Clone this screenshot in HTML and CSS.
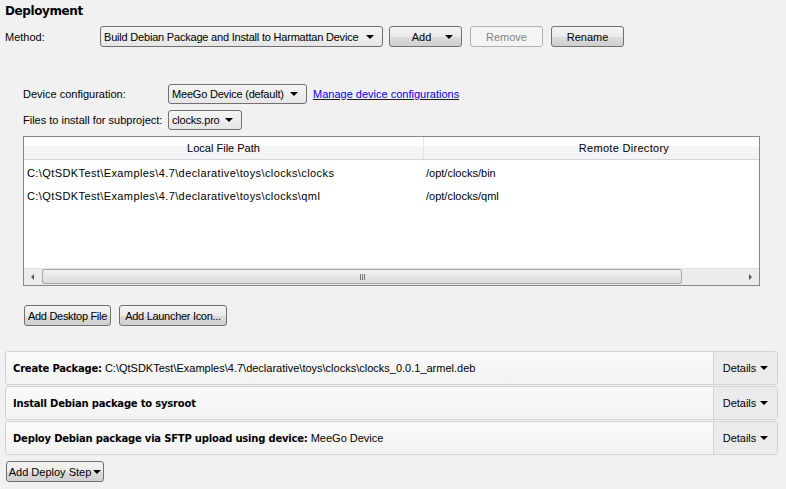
FILE: index.html
```html
<!DOCTYPE html>
<html>
<head>
<meta charset="utf-8">
<link rel="stylesheet" href="styles.css">
</head>
<body>
<div class="page">
  <div class="title">Deployment</div>
  <div class="method-row">
    <span class="method-label">Method:</span>
    <div class="combo combo-method"><span class="combo-text">Build Debian Package and Install to Harmattan Device</span><span class="arrow"></span></div>
    <div class="btn btn-add"><span class="btn-add-text">Add</span><span class="arrow"></span></div>
    <div class="btn btn-remove disabled">Remove</div>
    <div class="btn btn-rename">Rename</div>
  </div>

  <div class="device-section">
    <div class="form-row row-device">
      <span class="form-label">Device configuration:</span>
      <div class="combo combo-device"><span class="combo-text">MeeGo Device (default)</span><span class="arrow"></span></div>
      <a class="link">Manage device configurations</a>
    </div>
    <div class="form-row row-files">
      <span class="form-label">Files to install for subproject:</span>
      <div class="combo combo-files"><span class="combo-text">clocks.pro</span><span class="arrow"></span></div>
    </div>

    <div class="table">
      <div class="thead">
        <div class="th th-local">Local File Path</div>
        <div class="th th-remote">Remote Directory</div>
      </div>
      <div class="tbody">
        <div class="tr"><div class="td td-local">C:\QtSDKTest\Examples\4.7\declarative\toys\clocks\clocks</div><div class="td">/opt/clocks/bin</div></div>
        <div class="tr"><div class="td td-local">C:\QtSDKTest\Examples\4.7\declarative\toys\clocks\qml</div><div class="td">/opt/clocks/qml</div></div>
      </div>
      <div class="hscroll">
        <div class="sarrow sarrow-left"></div>
        <div class="strack"><div class="sthumb"><span class="grip"></span></div></div>
        <div class="sarrow sarrow-right"></div>
      </div>
    </div>

    <div class="file-buttons">
      <div class="btn btn-small btn-desktop">Add Desktop File</div>
      <div class="btn btn-small btn-launcher">Add Launcher Icon...</div>
    </div>
  </div>

  <div class="steps">
    <div class="step">
      <div class="step-text"><b>Create Package:</b> C:\QtSDKTest\Examples\4.7\declarative\toys\clocks\clocks_0.0.1_armel.deb</div>
      <div class="details">Details <span class="arrow"></span></div>
    </div>
    <div class="step">
      <div class="step-text"><b>Install Debian package to sysroot</b></div>
      <div class="details">Details <span class="arrow"></span></div>
    </div>
    <div class="step">
      <div class="step-text"><b>Deploy Debian package via SFTP upload using device:</b> MeeGo Device</div>
      <div class="details">Details <span class="arrow"></span></div>
    </div>
  </div>
  <div class="btn btn-deploy">Add Deploy Step<span class="arrow"></span></div>
</div>
</body>
</html>
```

FILE: styles.css
```css
html, body {
  margin: 0;
  padding: 0;
  background: #f1f1f1;
}
body {
  font-family: "Liberation Sans", Arial, sans-serif;
  font-size: 11px;
  color: #000;
  width: 786px;
  height: 489px;
  overflow: hidden;
}
.page {
  padding: 3px 9px 0 5px;
}
.title {
  font-family: "DejaVu Sans", sans-serif;
  font-weight: bold;
  font-size: 12px;
  letter-spacing: -0.4px;
  line-height: 16px;
  height: 18px;
}
.method-row {
  display: flex;
  align-items: center;
  height: 21px;
  margin-top: 5px;
}
.method-label {
  width: 95px;
}
.combo {
  box-sizing: border-box;
  height: 21px;
  border: 1px solid #707070;
  border-radius: 3px;
  background: linear-gradient(#f5f5f5, #e6e6e6);
  display: flex;
  align-items: center;
  padding: 0 8px 0 3px;
}
.combo-text {
  flex: 1;
  white-space: nowrap;
  letter-spacing: -0.2px;
}
.arrow {
  display: inline-block;
  width: 0;
  height: 0;
  border-left: 4px solid transparent;
  border-right: 4px solid transparent;
  border-top: 4px solid #000;
}
.combo-method { width: 283px; }
.btn {
  box-sizing: border-box;
  height: 21px;
  border: 1px solid #707070;
  border-radius: 3px;
  background: linear-gradient(#f3f3f3 0%, #ebebeb 50%, #dddddd 51%, #cfcfcf 100%);
  display: flex;
  align-items: center;
  justify-content: center;
  white-space: nowrap;
}
.btn-add {
  margin-left: 6px;
  width: 73px;
  padding: 0 8px 0 0;
}
.btn-add-text {
  flex: 1;
  text-align: center;
  padding-left: 8px;
}
.btn-remove {
  margin-left: 8px;
  width: 73px;
}
.disabled {
  border-color: #adb2b5;
  background: #f4f4f4;
  color: #838383;
}
.btn-rename {
  margin-left: 8px;
  width: 73px;
}
.device-section {
  padding-left: 18px;
  margin-top: 37px;
}
.form-row {
  display: flex;
  align-items: center;
  height: 20px;
}
.row-files { margin-top: 6px; }
.form-label {
  width: 145px;
  white-space: nowrap;
}
.combo-device { width: 139px; height: 20px; }
.combo-files { width: 74px; height: 20px; }
.link {
  margin-left: 6px;
  color: #0000ff;
  text-decoration: underline;
}
.table {
  box-sizing: border-box;
  margin-top: 6px;
  width: 737px;
  height: 150px;
  border: 1px solid #828790;
  background: #fff;
  display: flex;
  flex-direction: column;
  overflow: hidden;
}
.thead {
  display: flex;
  height: 22px;
  flex: none;
  border-bottom: 1px solid #d5d5d5;
  background: linear-gradient(#ffffff 0%, #ffffff 40%, #f3f4f6 41%, #f3f4f6 100%);
}
.th {
  display: flex;
  align-items: center;
  justify-content: center;
  flex: none;
}
.th-local {
  width: 399px;
  border-right: 1px solid #e3e3e3;
}
.th-remote {
  width: 400px;
  letter-spacing: 0.3px;
}
.tbody {
  flex: 1;
  padding-top: 1px;
}
.tr {
  display: flex;
  height: 23px;
  align-items: center;
}
.td {
  white-space: nowrap;
}
.td-local {
  width: 399px;
  padding-left: 3px;
  letter-spacing: 0.4px;
}
.hscroll {
  display: flex;
  height: 16px;
  flex: none;
  background: #ececec;
  border-top: 1px solid #e0e0e0;
  align-items: stretch;
}
.sarrow {
  width: 17px;
  display: flex;
  align-items: center;
  justify-content: center;
}
.sarrow-left::before {
  content: "";
  border-top: 3px solid transparent;
  border-bottom: 3px solid transparent;
  border-right: 3px solid #555;
}
.sarrow-right::before {
  content: "";
  border-top: 3px solid transparent;
  border-bottom: 3px solid transparent;
  border-left: 3px solid #555;
}
.strack {
  flex: 1;
  display: flex;
  padding: 0 0 1px 1px;
}
.sthumb {
  box-sizing: border-box;
  width: 640px;
  border: 1px solid #a7a7a7;
  border-radius: 2px;
  background: linear-gradient(to bottom, #f1f1f1, #dadada);
  display: flex;
  align-items: center;
  justify-content: center;
}
.grip {
  width: 5px;
  height: 6px;
  background: repeating-linear-gradient(to right, #777 0 1px, transparent 1px 2px);
}
.file-buttons {
  display: flex;
  gap: 8px;
  margin-top: 19px;
  padding-left: 1px;
}
.btn-small {
  height: 21px;
  letter-spacing: -0.3px;
}
.btn-desktop { width: 87px; }
.btn-launcher { width: 108px; }
.steps {
  margin-top: 25px;
  display: flex;
  flex-direction: column;
  gap: 1px;
  width: 773px;
}
.step {
  box-sizing: border-box;
  height: 34px;
  border: 1px solid #d3d3d3;
  border-radius: 3px;
  background: linear-gradient(#fafafa, #f3f3f3);
  display: flex;
  align-items: stretch;
}
.step-text {
  flex: 1;
  display: flex;
  align-items: center;
  padding-left: 7px;
  white-space: nowrap;
}
.step-text b {
  font-family: "DejaVu Sans", sans-serif;
  font-size: 10px;
  letter-spacing: -0.2px;
  margin-right: 3px;
}
.details {
  width: 63px;
  border-left: 1px solid #d3d3d3;
  background: #ebebeb;
  display: flex;
  align-items: center;
  justify-content: center;
  gap: 4px;
}
.btn-deploy {
  margin-top: 6px;
  margin-left: 1px;
  width: 98px;
  height: 21px;
  gap: 2px;
}
```
